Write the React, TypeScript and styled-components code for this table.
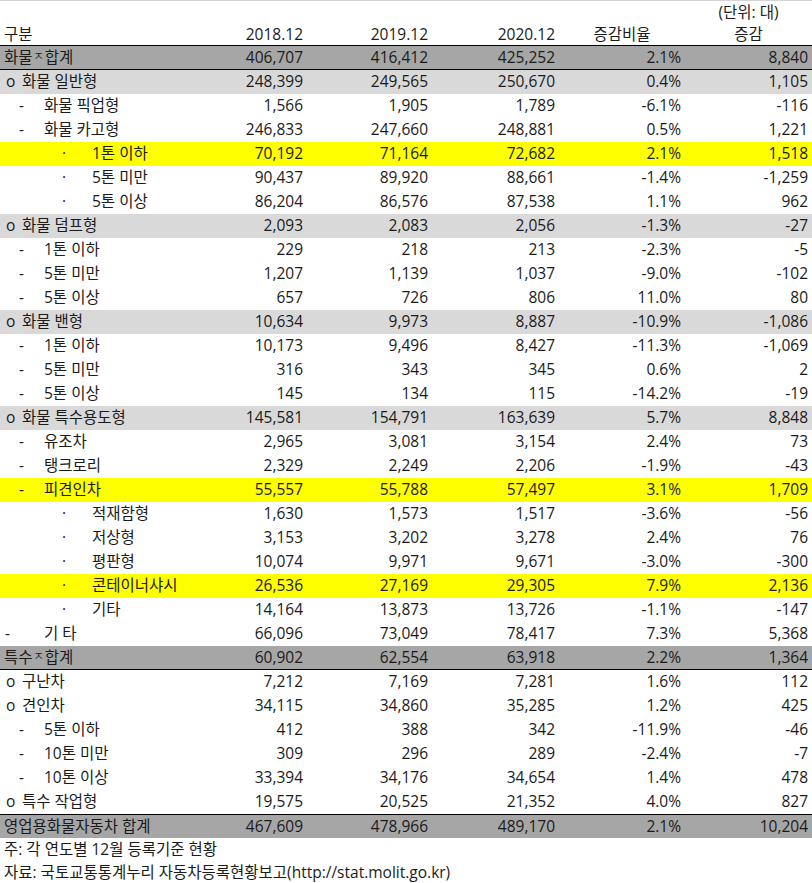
import { FC } from "react";
import styled, { createGlobalStyle } from "styled-components";

type Kind = "total" | "group" | "sub" | "item" | "etc";
type Fill = "dark" | "light" | "yellow" | "none";

interface Row {
  label: string;
  kind: Kind;
  fill?: Fill;
  lineBelow?: boolean;
  lineAbove?: boolean;
  values: [string, string, string, string, string];
}

const rows: Row[] = [
  { label: "화물ㅈ 합계", kind: "total", fill: "dark", lineBelow: true, values: ["406,707", "416,412", "425,252", "2.1%", "8,840"] },
  { label: "화물 일반형", kind: "group", fill: "light", values: ["248,399", "249,565", "250,670", "0.4%", "1,105"] },
  { label: "화물 픽업형", kind: "sub", values: ["1,566", "1,905", "1,789", "-6.1%", "-116"] },
  { label: "화물 카고형", kind: "sub", values: ["246,833", "247,660", "248,881", "0.5%", "1,221"] },
  { label: "1톤 이하", kind: "item", fill: "yellow", values: ["70,192", "71,164", "72,682", "2.1%", "1,518"] },
  { label: "5톤 미만", kind: "item", values: ["90,437", "89,920", "88,661", "-1.4%", "-1,259"] },
  { label: "5톤 이상", kind: "item", values: ["86,204", "86,576", "87,538", "1.1%", "962"] },
  { label: "화물 덤프형", kind: "group", fill: "light", values: ["2,093", "2,083", "2,056", "-1.3%", "-27"] },
  { label: "1톤 이하", kind: "sub", values: ["229", "218", "213", "-2.3%", "-5"] },
  { label: "5톤 미만", kind: "sub", values: ["1,207", "1,139", "1,037", "-9.0%", "-102"] },
  { label: "5톤 이상", kind: "sub", values: ["657", "726", "806", "11.0%", "80"] },
  { label: "화물 밴형", kind: "group", fill: "light", values: ["10,634", "9,973", "8,887", "-10.9%", "-1,086"] },
  { label: "1톤 이하", kind: "sub", values: ["10,173", "9,496", "8,427", "-11.3%", "-1,069"] },
  { label: "5톤 미만", kind: "sub", values: ["316", "343", "345", "0.6%", "2"] },
  { label: "5톤 이상", kind: "sub", values: ["145", "134", "115", "-14.2%", "-19"] },
  { label: "화물 특수용도형", kind: "group", fill: "light", values: ["145,581", "154,791", "163,639", "5.7%", "8,848"] },
  { label: "유조차", kind: "sub", values: ["2,965", "3,081", "3,154", "2.4%", "73"] },
  { label: "탱크로리", kind: "sub", values: ["2,329", "2,249", "2,206", "-1.9%", "-43"] },
  { label: "피견인차", kind: "sub", fill: "yellow", values: ["55,557", "55,788", "57,497", "3.1%", "1,709"] },
  { label: "적재함형", kind: "item", values: ["1,630", "1,573", "1,517", "-3.6%", "-56"] },
  { label: "저상형", kind: "item", values: ["3,153", "3,202", "3,278", "2.4%", "76"] },
  { label: "평판형", kind: "item", values: ["10,074", "9,971", "9,671", "-3.0%", "-300"] },
  { label: "콘테이너샤시", kind: "item", fill: "yellow", values: ["26,536", "27,169", "29,305", "7.9%", "2,136"] },
  { label: "기타", kind: "item", values: ["14,164", "13,873", "13,726", "-1.1%", "-147"] },
  { label: "기 타", kind: "etc", values: ["66,096", "73,049", "78,417", "7.3%", "5,368"] },
  { label: "특수ㅈ 합계", kind: "total", fill: "dark", lineBelow: true, values: ["60,902", "62,554", "63,918", "2.2%", "1,364"] },
  { label: "구난차", kind: "group", values: ["7,212", "7,169", "7,281", "1.6%", "112"] },
  { label: "견인차", kind: "group", values: ["34,115", "34,860", "35,285", "1.2%", "425"] },
  { label: "5톤 이하", kind: "sub", values: ["412", "388", "342", "-11.9%", "-46"] },
  { label: "10톤 미만", kind: "sub", values: ["309", "296", "289", "-2.4%", "-7"] },
  { label: "10톤 이상", kind: "sub", values: ["33,394", "34,176", "34,654", "1.4%", "478"] },
  { label: "특수 작업형", kind: "group", values: ["19,575", "20,525", "21,352", "4.0%", "827"] },
  { label: "영업용화물자동차 합계", kind: "total", fill: "dark", lineAbove: true, values: ["467,609", "478,966", "489,170", "2.1%", "10,204"] },
];

const fills: Record<Fill, string> = {
  dark: "#a6a6a6",
  light: "#d9d9d9",
  yellow: "#ffff00",
  none: "#ffffff",
};

const GlobalStyle = createGlobalStyle`
  html, body {
    margin: 0;
    padding: 0;
    background: #fff;
  }
  body {
    font-family: "Open Sans", "Noto Sans CJK KR", sans-serif;
    font-size: 15.5px;
    color: #1b1b1b;
  }
`;

const Sheet = styled.div`
  width: 812px;
  height: 883px;
  overflow: hidden;
  border-top: 1px solid #d4d4d4;
  box-sizing: border-box;
`;

const Grid = styled.div`
  display: grid;
  grid-template-columns: 180px 127px 125px 127px 126px 127px;
`;

const Line = styled.div<{ $fill: Fill; $below?: boolean; $above?: boolean; $h?: number }>`
  display: contents;
  & > div {
    height: ${(p) => p.$h ?? 24}px;
    background: ${(p) => fills[p.$fill]};
    border-bottom: ${(p) => (p.$below ? "1px solid #000" : "none")};
    border-top: ${(p) => (p.$above ? "1px solid #000" : "none")};
    box-sizing: border-box;
  }
`;

const Cell = styled.div<{ $align?: "left" | "right" | "center" }>`
  display: flex;
  align-items: center;
  justify-content: ${(p) =>
    p.$align === "left" ? "flex-start" : p.$align === "center" ? "center" : "flex-end"};
  padding: 0 4px;
  white-space: nowrap;
  line-height: 1;
`;

const indent: Record<Kind, { mark: string; markAt: number; textAt: number }> = {
  total: { mark: "", markAt: 0, textAt: 4 },
  group: { mark: "o", markAt: 6, textAt: 22 },
  sub: { mark: "-", markAt: 19, textAt: 44 },
  item: { mark: "·", markAt: 62, textAt: 92 },
  etc: { mark: "-", markAt: 5, textAt: 44 },
};

const LabelCell = styled.div`
  position: relative;
  display: flex;
  align-items: center;
  white-space: nowrap;
  line-height: 1;
`;

const Mark = styled.span<{ $at: number }>`
  position: absolute;
  left: ${(p) => p.$at}px;
`;

const LabelText = styled.span<{ $at: number }>`
  padding-left: ${(p) => p.$at}px;
`;

const Jamo = styled.span`
  font-size: 11px;
  vertical-align: 3px;
  margin: 0 1px;
`;

const Note = styled.div<{ $h?: number }>`
  height: ${(p) => p.$h ?? 24}px;
  display: flex;
  align-items: center;
  padding-left: 4px;
  white-space: nowrap;
  line-height: 1;
`;

const renderLabel = (label: string) => {
  const i = label.indexOf("ㅈ");
  if (i < 0) return label;
  return (
    <>
      {label.slice(0, i)}
      <Jamo>ㅈ</Jamo>
      {label.slice(i + 2)}
    </>
  );
};

const App: FC = () => (
  <Sheet>
    <GlobalStyle />
    <Grid>
      <Line $fill="none" $h={23}>
        <Cell />
        <Cell />
        <Cell />
        <Cell />
        <Cell />
        <Cell $align="center">(단위: 대)</Cell>
      </Line>
      <Line $fill="none" $below $h={22}>
        <Cell $align="left">구분</Cell>
        <Cell>2018.12</Cell>
        <Cell>2019.12</Cell>
        <Cell>2020.12</Cell>
        <Cell $align="center">증감비율</Cell>
        <Cell $align="center">증감</Cell>
      </Line>
      {rows.map((r, idx) => {
        const ind = indent[r.kind];
        return (
          <Line key={idx} $fill={r.fill ?? "none"} $below={r.lineBelow} $above={r.lineAbove}>
            <LabelCell>
              {ind.mark && <Mark $at={ind.markAt}>{ind.mark}</Mark>}
              <LabelText $at={ind.textAt}>{renderLabel(r.label)}</LabelText>
            </LabelCell>
            {r.values.map((v, j) => (
              <Cell key={j}>{v}</Cell>
            ))}
          </Line>
        );
      })}
    </Grid>
    <Note>주: 각 연도별 12월 등록기준 현황</Note>
    <Note $h={21}>자료: 국토교통통계누리 자동차등록현황보고(http://stat.molit.go.kr)</Note>
  </Sheet>
);

export default App;
